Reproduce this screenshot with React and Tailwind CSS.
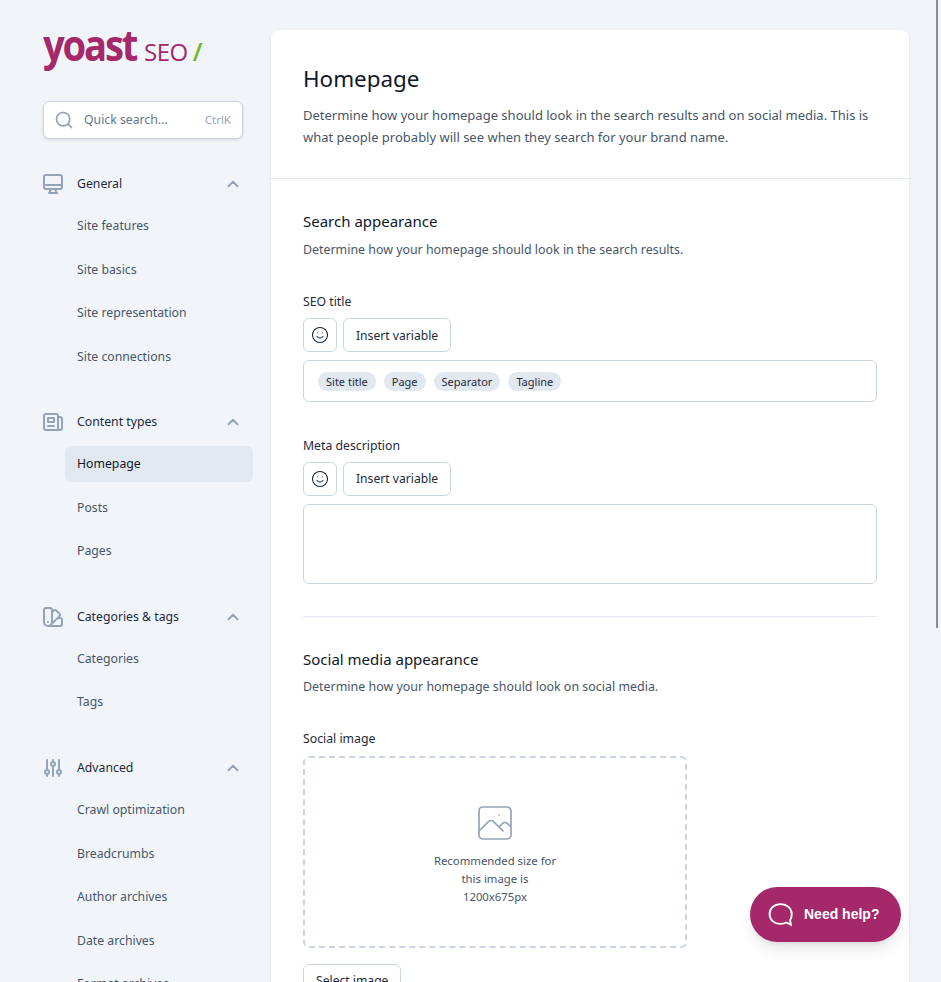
import { Search, ChevronUp, Smile } from 'lucide-react'

const font = "font-['Noto_Sans','Open_Sans',sans-serif]"

// outline icons, 24 box with 2px stroke unless told otherwise
function Outline({ d, className = 'w-[24px] h-[24px]', strokeWidth = 2 }) {
  return (
    <svg viewBox="0 0 24 24" className={className} fill="none" stroke="currentColor" strokeWidth={strokeWidth} strokeLinecap="round" strokeLinejoin="round">
      <path d={d} />
    </svg>
  )
}

const icons = {
  monitor: 'M9.75 17L9 20l-1 1h8l-1-1-.75-3M3 13h18M5 17h14a2 2 0 002-2V5a2 2 0 00-2-2H5a2 2 0 00-2 2v10a2 2 0 002 2z',
  news: 'M19 20H5a2 2 0 01-2-2V6a2 2 0 012-2h10a2 2 0 012 2v1m2 13a2 2 0 01-2-2V7m2 13a2 2 0 002-2V9a2 2 0 00-2-2h-2m-4-3H9M7 16h6M7 8h6v4H7V8z',
  swatch: 'M7 21a4 4 0 01-4-4V5a2 2 0 012-2h4a2 2 0 012 2v12a4 4 0 01-4 4zm0 0h12a2 2 0 002-2v-4a2 2 0 00-2-2h-2.343M11 7.343l1.657-1.657a2 2 0 012.828 0l2.829 2.829a2 2 0 010 2.828l-8.486 8.485M7 17h.01',
  sliders: 'M12 6V4m0 2a2 2 0 100 4m0-4a2 2 0 110 4m-6 8a2 2 0 100-4m0 4a2 2 0 110-4m0 4v2m0-6V4m6 6v10m6-2a2 2 0 100-4m0 4a2 2 0 110-4m0 4v2m0-6V4',
  photo: 'M4 16l4.586-4.586a2 2 0 012.828 0L16 16m-2-2l1.586-1.586a2 2 0 012.828 0L20 14m-6-6h.01M6 20h12a2 2 0 002-2V6a2 2 0 00-2-2H6a2 2 0 00-2 2v12a2 2 0 002 2z',
}

const groups = [
  { name: 'General', icon: icons.monitor, items: ['Site features', 'Site basics', 'Site representation', 'Site connections'] },
  { name: 'Content types', icon: icons.news, items: ['Homepage', 'Posts', 'Pages'] },
  { name: 'Categories & tags', icon: icons.swatch, items: ['Categories', 'Tags'] },
  { name: 'Advanced', icon: icons.sliders, items: ['Crawl optimization', 'Breadcrumbs', 'Author archives', 'Date archives', 'Format archives'] },
]

function Logo() {
  return (
    <div className="flex items-baseline h-[44px] -mt-[6px] leading-none font-['Open_Sans',sans-serif]">
      <span className="w-[96px] shrink-0 font-bold text-[43px] tracking-[-2.5px] text-[#a4286a] leading-[40px] scale-x-[.89] origin-left">yoast</span>
      <span className="text-[24px] tracking-[-0.5px] text-[#a4286a] ml-[5px]">SEO</span>
      <span className="text-[25px] font-semibold text-[#77b227] ml-[5px]">/</span>
    </div>
  )
}

function Sidebar() {
  return (
    <aside className="w-[271px] shrink-0 pl-[43px] pr-[18px] pt-[31px]">
      <Logo />
      <div className="mt-[32px] w-[200px] h-[38px] flex items-center px-[10px] bg-white rounded-md border border-[#cbd5e1] shadow-sm text-[12.25px]">
        <Search className="w-[20px] h-[20px] text-[#94a3b8]" strokeWidth={2} />
        <span className="ml-[10px] text-[#64748b]">Quick search...</span>
        <span className="ml-auto text-[11.5px] text-[#94a3b8] pr-[1px]">CtrlK</span>
      </div>
      <nav className="mt-[25px] flex flex-col gap-[28.2px]">
        {groups.map(g => (
          <div key={g.name}>
            <div className="flex items-center h-[42px] text-[12.25px] text-[#1e293b] -mt-[1px]">
              <span className="w-[24px] mr-[12px] -ml-[2px] text-[#94a3b8] flex"><Outline d={g.icon} /></span>
              <span>{g.name}</span>
              <ChevronUp className="ml-auto mr-[11px] w-[18px] h-[18px] text-[#94a3b8]" strokeWidth={2.5} />
            </div>
            <ul className="flex flex-col gap-[8px] ml-[22px] mt-[3px]">
              {g.items.map(item => (
                <li key={item} className={`px-[12px] py-[8px] rounded-md text-[12.25px] leading-[19.5px] ${item === 'Homepage' ? 'bg-[#e2e8f0] text-[#0f172a]' : 'text-[#475569]'}`}>
                  {item}
                </li>
              ))}
            </ul>
          </div>
        ))}
      </nav>
    </aside>
  )
}

function EditorField({ label, children, height }) {
  return (
    <div>
      <label className="block text-[12.25px] leading-[19.5px] text-[#1e293b]">{label}</label>
      <div className="mt-[6.5px] flex gap-[6px]">
        <button className="w-[34px] h-[34px] flex items-center justify-center bg-white rounded-md border border-[#cbd5e1] text-[#1e293b]">
          <Smile className="w-[18px] h-[18px]" strokeWidth={1.5} />
        </button>
        <button className="h-[34px] px-[12px] pt-[2px] bg-white rounded-md border border-[#cbd5e1] text-[12.15px] text-[#1e293b]">Insert variable</button>
      </div>
      <div className={`mt-[8px] w-full rounded-md border border-[#cbd5e1] flex items-center gap-[8px] px-[14px] ${height}`}>
        {children}
      </div>
    </div>
  )
}

function Main() {
  return (
    <main className="w-[638px] shrink-0 mt-[30px] bg-white rounded-t-lg shadow-sm">
      <header className="px-[32px] pt-[32px] pb-[32px] border-b border-[#e2e8f0] h-[149px]">
        <h1 className="text-[22.4px] leading-[34px] text-[#0f172a]">Homepage</h1>
        <p className="mt-[8px] text-[13px] leading-[22px] text-[#475569]">
          Determine how your homepage should look in the search results and on social media. This is what people probably will see when they search for your brand name.
        </p>
      </header>
      <div className="px-[32px] pt-[30px]">
        <h2 className="text-[15px] leading-[24px] text-[#0f172a]">Search appearance</h2>
        <p className="mt-[7px] text-[12.4px] leading-[20px] text-[#475569]">Determine how your homepage should look in the search results.</p>

        <div className="mt-[32px]">
          <EditorField label="SEO title" height="h-[42px]">
            {['Site title', 'Page', 'Separator', 'Tagline'].map(t => (
              <span key={t} className="h-[19px] px-[8px] rounded-full bg-[#e2e8f0] text-[11px] leading-[19px] text-[#1e293b]">{t}</span>
            ))}
          </EditorField>
        </div>
        <div className="mt-[33.5px]">
          <EditorField label="Meta description" height="h-[80px]" />
        </div>

        <hr className="mt-[32.5px] border-[#e2e8f0]" />

        <h2 className="mt-[30px] text-[15px] leading-[24px] text-[#0f172a]">Social media appearance</h2>
        <p className="mt-[6px] text-[12.45px] leading-[20px] text-[#475569]">Determine how your homepage should look on social media.</p>

        <label className="block mt-[32px] text-[12.25px] leading-[19.5px] text-[#1e293b]">Social image</label>
        <div className="mt-[7px] w-[384px] h-[192px] rounded-md border-2 border-dashed border-[#cbd5e1] flex flex-col items-center justify-center">
          <span className="text-[#94a3b8]"><Outline d={icons.photo} className="w-[48px] h-[48px]" strokeWidth={0.85} /></span>
          <p className="mt-[5px] mb-[-2px] text-center text-[11.35px] leading-[18px] text-[#475569]">
            Recommended size for<br />this image is<br />1200x675px
          </p>
        </div>
        <button className="mt-[16px] h-[34px] px-[12px] pt-[2px] bg-white rounded-md border border-[#cbd5e1] text-[12.15px] text-[#1e293b]">Select image</button>
      </div>
    </main>
  )
}

export default function App() {
  return (
    <div className={`relative h-[982px] overflow-hidden bg-[#f1f5f9] flex ${font}`}>
      <Sidebar />
      <Main />
      <div className="absolute top-0 right-[3px] w-[2px] h-[628px] bg-[#8f8f8f]" />
      <button className="absolute left-[750px] top-[887px] w-[151px] h-[55px] rounded-full bg-[#a4286a] shadow-lg flex items-center pl-[18px] text-white font-['Liberation_Sans',sans-serif] font-bold text-[14px]">
        <svg viewBox="0 0 24 24" className="w-[25px] h-[25px]" fill="none" stroke="currentColor" strokeWidth="1.8">
          <path d="M12 2C6 2 1.5 6 1.5 11.5S6 21 12 21c2 0 4-.4 5.500-1.300L22 22l-.8-4.500c1.100-1.500 1.600-3.600 1.600-6C22.800 6 18 2 12 2Z" />
        </svg>
        <span className="ml-[11px]">Need help?</span>
      </button>
    </div>
  )
}
